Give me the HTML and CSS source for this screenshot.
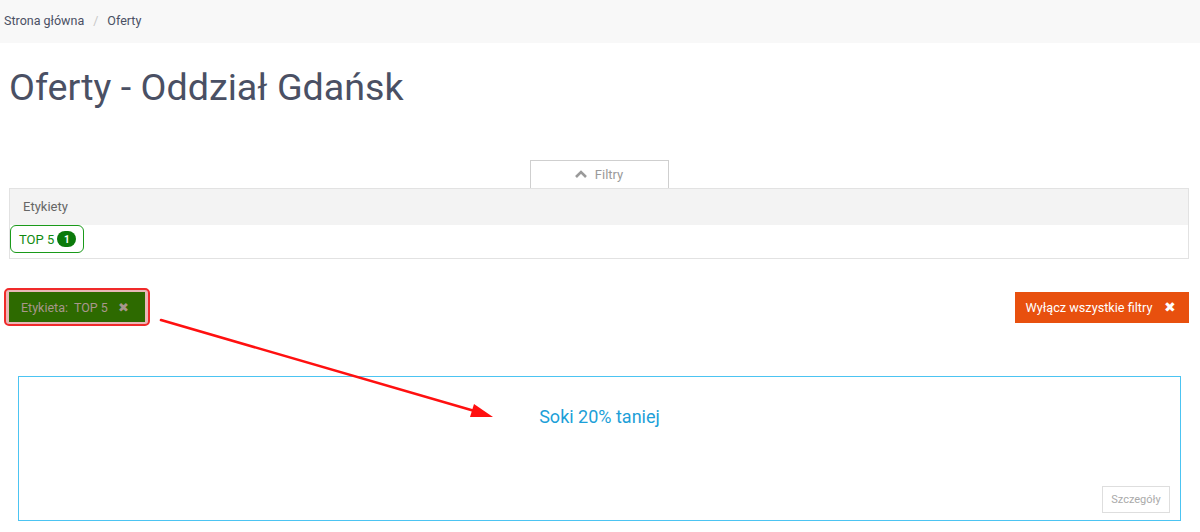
FILE: index.html
```html
<!DOCTYPE html>
<html lang="pl">
<head>
<meta charset="utf-8">
<title>Oferty - Oddział Gdańsk</title>
<link rel="stylesheet" href="styles.css">
</head>
<body>
<nav class="breadcrumb">
  <a class="crumb" href="#">Strona główna</a>
  <span class="sep">/</span>
  <span class="crumb current">Oferty</span>
</nav>
<main class="page">
  <h1 class="title">Oferty - Oddział Gdańsk</h1>

  <div class="filters">
    <div class="tab-row">
      <button class="tab">
        <svg class="chev" viewBox="0 0 12 8" width="12" height="8"><path d="M1 7 L6 2 L11 7" fill="none" stroke="#9a9a9a" stroke-width="2.6"/></svg>
        Filtry
      </button>
    </div>
    <div class="panel">
      <div class="panel-head">Etykiety</div>
      <div class="panel-body">
        <span class="tag">TOP 5 <span class="count">1</span></span>
      </div>
    </div>
  </div>

  <div class="active-row">
    <div class="highlight">
      <span class="active-filter">Etykieta:&nbsp; TOP 5 <span class="x">✖</span></span>
    </div>
    <button class="clear">Wyłącz wszystkie filtry <span class="x">✖</span></button>
  </div>

  <div class="offer">
    <div class="offer-title">Soki 20% taniej</div>
    <div class="offer-foot"><button class="details">Szczegóły</button></div>
  </div>
</main>
<svg class="arrow" width="1200" height="532" viewBox="0 0 1200 532">
  <line x1="161" y1="320" x2="478" y2="412" stroke="#ff1010" stroke-width="2.6" stroke-linecap="round"/>
  <polygon points="493,417 474,404 470,417" fill="#ff1010"/>
</svg>
</body>
</html>
```
FILE: styles.css
```css
* { box-sizing: border-box; }
html, body { margin: 0; padding: 0; }
body {
  font-family: Roboto, "Noto Sans", sans-serif;
  background: #fff;
  color: #4a5064;
  width: 1200px;
  height: 532px;
  overflow: hidden;
  position: relative;
}
.breadcrumb {
  background: #f8f8f8;
  height: 43px;
  display: flex;
  align-items: center;
  padding: 0 4px 3px;
  font-size: 12.5px;
  gap: 8px;
}
.crumb { color: #4a5064; text-decoration: none; }
.sep { color: #c8c8c8; margin: 0 1px; }
.page { padding: 0 11px 0 9px; }
.title {
  margin: 0;
  padding-top: 22px;
  font-size: 37.7px;
  font-weight: 400;
  line-height: 44px;
  color: #4a5064;
}
.filters { margin-top: 51px; }
.tab-row { display: flex; justify-content: center; }
.tab {
  width: 139px;
  height: 28px;
  border: 1px solid #cfcfcf;
  border-bottom: none;
  background: #fff;
  color: #9a9a9a;
  font-family: inherit;
  font-size: 13px;
  display: flex;
  align-items: center;
  justify-content: center;
  gap: 8px;
  padding: 0;
}
.chev { margin-top: -2px; }
.panel {
  border: 1px solid #e2e2e2;
  height: 71px;
}
.panel-head {
  background: #f3f3f3;
  height: 36px;
  line-height: 36px;
  padding-left: 13px;
  font-size: 13px;
  color: #666;
}
.panel-body { padding: 0; }
.tag {
  display: inline-flex;
  align-items: center;
  height: 28px;
  padding: 0 7px 0 8px;
  border: 1.5px solid #1a9a1a;
  border-radius: 6px;
  color: #108a10;
  font-size: 13px;
  gap: 3px;
}
.count {
  display: inline-flex;
  align-items: center;
  justify-content: center;
  width: 19px;
  height: 16px;
  border-radius: 9px;
  background: #0b7a0b;
  color: #fff;
  font-size: 10px;
  font-weight: 700;
}
.active-row {
  display: flex;
  justify-content: space-between;
  align-items: center;
  margin-top: 29px;
  margin-left: -5px;
}
.highlight {
  border: 2px solid #f02a2a;
  border-radius: 5px;
  background: #e9b8b8;
  padding: 2px 3px;
}
.active-filter {
  display: flex;
  align-items: center;
  height: 30px;
  width: 136px;
  padding: 0 12px;
  background: #2d6a00;
  color: #a8968c;
  font-size: 12.5px;
  gap: 6px;
}
.active-filter .x { font-size: 13px; margin-left: 4px; }
.clear {
  height: 31px;
  width: 174px;
  border: none;
  background: #e8500e;
  color: #fff;
  font-family: inherit;
  font-size: 12.7px;
  display: flex;
  align-items: center;
  justify-content: center;
  gap: 12px;
  padding: 0 2px 0 0;
}
.clear .x { font-size: 14px; }
.offer {
  margin: 50px 8px 0 9px;
  height: 145px;
  border: 1px solid #4cc4f2;
  display: flex;
  flex-direction: column;
}
.offer-title {
  text-align: center;
  color: #1c9fd8;
  font-size: 18px;
  margin-top: 29px;
  flex: 1;
}
.offer-foot {
  display: flex;
  justify-content: flex-end;
  padding: 0 10px 7px 0;
}
.details {
  height: 27px;
  width: 68px;
  border: 1px solid #dedede;
  background: #fff;
  color: #aaa;
  font-family: inherit;
  font-size: 11px;
  padding: 0;
}
.arrow {
  position: absolute;
  left: 0;
  top: 0;
  pointer-events: none;
}
```
